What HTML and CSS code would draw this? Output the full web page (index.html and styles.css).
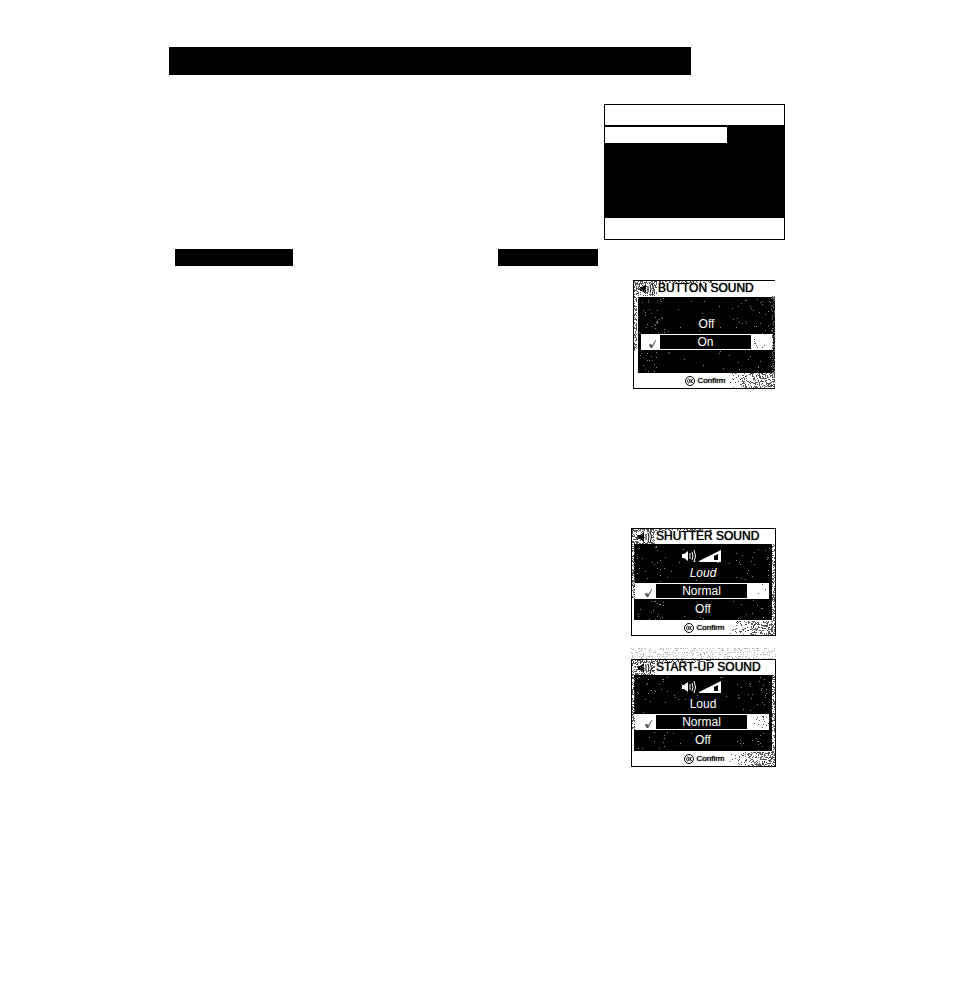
FILE: index.html
```html
<!DOCTYPE html>
<html lang="en">
<head>
<meta charset="utf-8">
<title>Sound settings</title>
<link rel="stylesheet" href="styles.css">
</head>
<body>
<svg class="defs" aria-hidden="true">
  <symbol id="speaker" viewBox="0 0 14 12">
    <path d="M0 4h2l4-3v10l-4-3H0z" fill="currentColor"/>
    <path d="M8 3v6M10 2q2 4 0 8M12 0q3 6 0 12" fill="none" stroke="currentColor"/>
  </symbol>
  <symbol id="volume" viewBox="0 0 22 12">
    <path fill-rule="evenodd" d="M0 12v-1L22 0v12zM15 6v4h4V4z" fill="currentColor"/>
  </symbol>
  <symbol id="check" viewBox="0 0 8 8">
    <path d="M0 5l2-1 1 2 4-6-4 8H2z" fill="currentColor" stroke="currentColor" stroke-width=".5"/>
  </symbol>
  <symbol id="ok" viewBox="0 0 10 10">
    <circle cx="5" cy="5" r="4.5" fill="none" stroke="currentColor"/>
    <ellipse cx="3.7" cy="5" rx="1.1" ry="2" fill="none" stroke="currentColor" stroke-width=".8"/>
    <path d="M6 3v4M8 3L6 5l2 2" fill="none" stroke="currentColor" stroke-width=".8"/>
  </symbol>
</svg>
<main class="page">
  <div class="banner"></div>
  <div class="intro">
    <div class="menu">
      <div class="menu-head"></div>
      <div class="menu-body"><div class="menu-row"></div></div>
      <div class="menu-foot"></div>
    </div>
  </div>
  <div class="labels"><div class="label"></div><div class="label label-short"></div></div>
  <div class="screens">
    <section class="screen screen-open" data-seed="7">
      <h2><svg class="speaker"><use href="#speaker"/></svg>BUTTON SOUND</h2>
      <div class="panel panel-two">
        <button type="button">Off</button>
        <button type="button" class="chosen"><svg class="check"><use href="#check"/></svg><span>On</span></button>
      </div>
      <p><svg class="ok"><use href="#ok"/></svg>Confirm</p>
    </section>
    <section class="screen" data-seed="23">
      <h2><svg class="speaker"><use href="#speaker"/></svg>SHUTTER SOUND</h2>
      <div class="panel">
        <div class="level"><svg class="speaker"><use href="#speaker"/></svg><svg class="volume"><use href="#volume"/></svg></div>
        <button type="button" class="slanted">Loud</button>
        <button type="button" class="chosen"><svg class="check"><use href="#check"/></svg><span>Normal</span></button>
        <button type="button" class="last">Off</button>
      </div>
      <p><svg class="ok"><use href="#ok"/></svg>Confirm</p>
    </section>
    <svg class="band" data-seed="5" aria-hidden="true"></svg>
    <section class="screen" data-seed="41">
      <h2><svg class="speaker"><use href="#speaker"/></svg>START-UP SOUND</h2>
      <div class="panel">
        <div class="level"><svg class="speaker"><use href="#speaker"/></svg><svg class="volume"><use href="#volume"/></svg></div>
        <button type="button">Loud</button>
        <button type="button" class="chosen"><svg class="check"><use href="#check"/></svg><span>Normal</span></button>
        <button type="button" class="last">Off</button>
      </div>
      <p><svg class="ok"><use href="#ok"/></svg>Confirm</p>
    </section>
  </div>
</main>
<script src="grain.js"></script>
</body>
</html>
```

FILE: styles.css
```css
* { box-sizing: border-box; }
body { margin: 0; background: #fff; color: #000; font-family: "Liberation Sans", Arial, sans-serif; }
.defs { display: none; }
.page { padding: 47px 168px 48px 169px; }
.banner { height: 28px; margin-right: 94px; background: #000; }
.intro { display: flex; justify-content: flex-end; margin-top: 29px; }
.menu { width: 181px; border: 1px solid #000; }
.menu-head { height: 20px; }
.menu-body { height: 93px; padding-top: 2px; background: #000; }
.menu-row { width: 122px; height: 16px; background: #fff; }
.menu-foot { height: 21px; }
.labels { display: flex; justify-content: space-between; margin: 9px 187px 0 6px; }
.label { width: 118px; height: 17px; background: #000; }
.label-short { width: 100px; }
.screens { display: flex; flex-direction: column; align-items: flex-end; margin: 14px 9px 0 0; }
.screen { position: relative; width: 145px; border: 1px solid #000; margin-bottom: 12px; }
.screen-open { width: 142px; margin: 0 1px 139px 0; border-right: 0; }
.screen h2 { display: flex; align-items: center; gap: 4px; height: 15px; margin: 0; padding-left: 6px; font-size: 12px; line-height: 15px; font-weight: 400; white-space: nowrap; text-shadow: 0 0 1px #000; }
.speaker { flex: none; width: 14px; height: 12px; }
.panel { display: flex; flex-direction: column; height: 76px; margin: 0 3px 0 2px; padding-top: 3px; background: #000; color: #fff; }
.screen-open .panel { margin: 1px 0 0 4px; }
.panel-two { padding-top: 18px; }
.level { display: flex; align-items: center; justify-content: center; gap: 3px; height: 17px; padding-right: 4px; }
.volume { width: 22px; height: 12px; }
.panel button { display: block; height: 19px; padding: 0; border: 0; background: none; color: #fff; font: 12px/19px "Liberation Sans", Arial, sans-serif; text-align: center; }
.panel .slanted { font-style: italic; }
.panel .chosen { display: flex; align-items: center; height: 16px; margin: 0 3px 0 0; background: #fff; color: #555; }
.screen-open .chosen { margin: 0 2px 0 3px; }
.chosen span { width: 91px; height: 14px; background: #000; color: #fff; line-height: 14px; }
.check { width: 8px; height: 8px; margin: 4px 3px 0 11px; }
.screen-open .check { margin-left: 8px; }
.panel .last { height: 20px; line-height: 20px; }
.screen p { display: flex; align-items: center; justify-content: center; gap: 2px; height: 15px; margin: 0; padding-left: 2px; font-size: 8px; line-height: 15px; text-shadow: 0 0 1px #000; }
.ok { width: 10px; height: 10px; }
.grain { position: absolute; inset: 0; width: 100%; height: 100%; pointer-events: none; }
.band { width: 145px; height: 11px; }
```

FILE: grain.js
```js
// Speckled one-pixel shading over the screens, from a fixed seed.
function makeRandom(seed) {
  return function () {
    seed = (seed * 1664525 + 1013904223) % 4294967296;
    return seed / 4294967296;
  };
}
function dots(w, h, random, density) {
  let d = "";
  for (let y = 0; y < h; y++) {
    for (let x = 0; x < w; x++) {
      if (random() < density(x, y)) d += `M${x} ${y}h1v1h-1z`;
    }
  }
  return d;
}
function dark(x, y, w) {
  if (y < 15) {
    if (x > 5 && x < 20 && y > 2 && y < 13) return 0.12;
    if (x < 23) return 0.5;
    return y < 2 && x < 80 ? 0.4 : 0;
  }
  if (x < 3 && y < 70) return 0.45;
  if (y > 91) return x > w - 46 ? 0.55 * (x - w + 52) / 52 : 0;
  if (x > w - 4) return 0.4;
  if (y > 54 && y < 68 && x > w - 22) return 0.04;
  return 0;
}
function light(x, y, w) {
  if (y < 17 || y > 90 || x < 4 || x > w - 4 || (y > 52 && y < 70)) return 0;
  return x < 36 || x > w - 40 ? 0.02 : 0.003;
}
const path = (d, fill) => `<path d="${d}" fill="${fill}" shape-rendering="crispEdges"/>`;
document.querySelectorAll(".screen").forEach((el) => {
  const w = el.clientWidth, h = el.clientHeight;
  const random = makeRandom(+el.dataset.seed);
  el.insertAdjacentHTML("beforeend", `<svg class="grain" aria-hidden="true">${
    path(dots(w, h, random, (x, y) => dark(x, y, w)), "#555")}${
    path(dots(w, h, random, (x, y) => light(x, y, w)), "#888")}</svg>`);
});
document.querySelectorAll(".band").forEach((el) => {
  const random = makeRandom(+el.dataset.seed);
  el.innerHTML = path(dots(145, 11, random, (x, y) => (y % 2 ? 0.08 : 0.3)), "#bbb");
});
```
